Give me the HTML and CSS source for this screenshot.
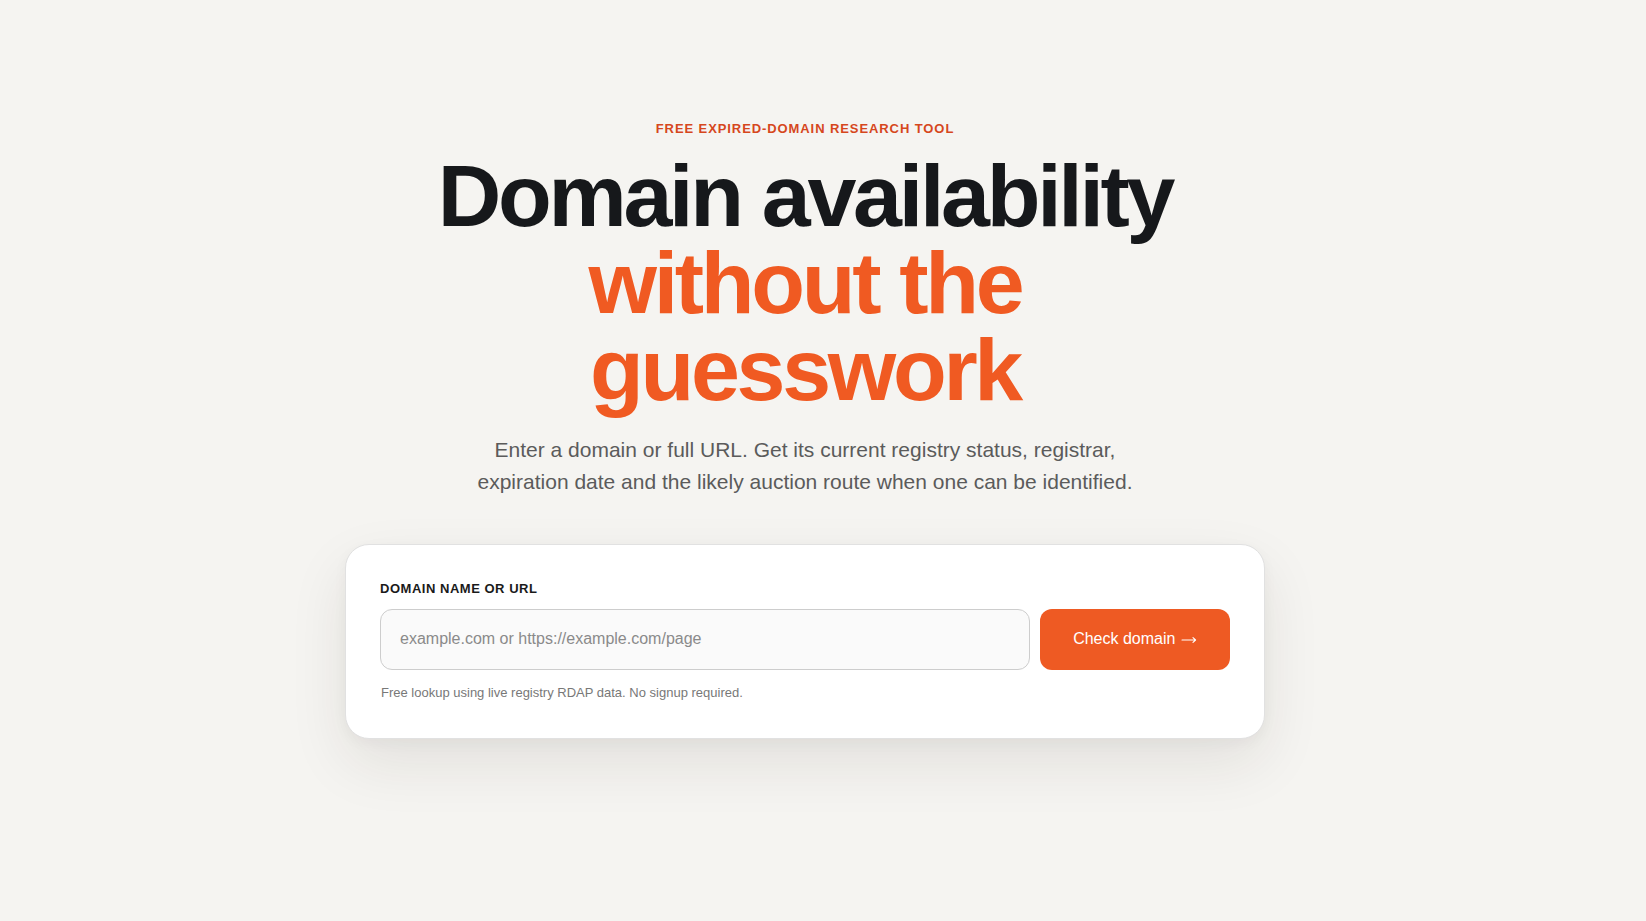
FILE: index.html
```html
<!DOCTYPE html>
<html lang="en">
<head>
<meta charset="utf-8">
<title>Domain availability without the guesswork</title>
<link rel="stylesheet" href="styles.css">
</head>
<body>
<main class="hero">
  <p class="eyebrow">Free expired-domain research tool</p>
  <h1 class="title">Domain availability <span class="accent">without the guesswork</span></h1>
  <p class="lede">Enter a domain or full URL. Get its current registry status, registrar, expiration date and the likely auction route when one can be identified.</p>
  <form class="card" onsubmit="return false;">
    <label class="label" for="domain">Domain name or URL</label>
    <div class="row">
      <input class="input" id="domain" type="text" placeholder="example.com or https://example.com/page">
      <button class="button" type="submit">Check domain <svg class="arrow" viewBox="0 0 16 10" width="16" height="10" aria-hidden="true"><path d="M1 5H14.6M12 2.6L14.6 5L12 7.4" fill="none" stroke="currentColor" stroke-width="1.1" stroke-linecap="round" stroke-linejoin="round"/></svg></button>
    </div>
    <p class="note">Free lookup using live registry RDAP data. No signup required.</p>
  </form>
</main>
</body>
</html>
```

FILE: styles.css
```css
* { box-sizing: border-box; }

html, body {
  margin: 0;
  padding: 0;
  background: #f5f4f1;
  font-family: "Liberation Sans", Arial, sans-serif;
  min-height: 100%;
}

body {
  min-height: 921px;
  padding-right: 36px;
}

.hero {
  display: flex;
  flex-direction: column;
  align-items: center;
  padding-top: 119px;
  text-align: center;
}

.eyebrow {
  margin: 0;
  font-size: 13px;
  line-height: 19.5px;
  font-weight: 700;
  letter-spacing: 0.07em;
  text-transform: uppercase;
  color: #d6471d;
}

.title {
  margin: 13px 0 0;
  max-width: 800px;
  font-size: 88px;
  line-height: 87px;
  font-weight: 700;
  letter-spacing: -0.0375em;
  color: #16181b;
}

.accent {
  color: #f05a22;
}

.lede {
  margin: 21px 0 0;
  max-width: 690px;
  font-size: 21px;
  line-height: 32px;
  color: #5b5b5b;
}

.card {
  margin-top: 46px;
  width: 920px;
  padding: 36px 34px 36px;
  background: #ffffff;
  border: 1px solid #e1e1e1;
  border-radius: 24px;
  box-shadow: 0 24px 60px rgba(40, 30, 20, 0.09), 0 4px 14px rgba(40, 30, 20, 0.04);
  text-align: left;
}

.label {
  display: block;
  font-size: 13px;
  line-height: 15px;
  font-weight: 700;
  letter-spacing: 0.04em;
  text-transform: uppercase;
  color: #1a1a1a;
  margin: 0 0 13px;
}

.row {
  display: flex;
  gap: 10px;
}

.input {
  flex: 1;
  height: 61px;
  padding: 0 19px;
  border: 1px solid #cdcdcd;
  border-radius: 12px;
  background: #fafafa;
  font-family: "Liberation Sans", Arial, sans-serif;
  font-size: 16px;
  color: #222;
  outline: none;
}

.input::placeholder {
  color: #8a8a8a;
}

.button {
  width: 190px;
  height: 61px;
  border: none;
  border-radius: 12px;
  background: #ee5a23;
  color: #ffffff;
  font-family: "Liberation Sans", Arial, sans-serif;
  font-size: 16px;
  cursor: pointer;
}

.arrow {
  vertical-align: -1px;
  margin-left: 1px;
}

.note {
  margin: 14px 0 0 1px;
  font-size: 13px;
  line-height: 18px;
  color: #787878;
}
```
